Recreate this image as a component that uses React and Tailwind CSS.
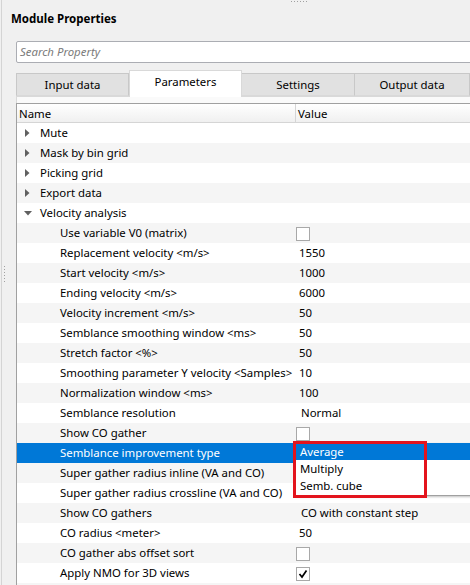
import React from "react";

const rows = [
  { name: "Mute", top: true, arrow: "right" },
  { name: "Mask by bin grid", top: true, arrow: "right" },
  { name: "Picking grid", top: true, arrow: "right" },
  { name: "Export data", top: true, arrow: "right" },
  { name: "Velocity analysis", top: true, arrow: "down" },
  { name: "Use variable V0 (matrix)", v: { t: "check" } },
  { name: "Replacement velocity <m/s>", v: { t: "text", s: "1550" } },
  { name: "Start velocity <m/s>", v: { t: "text", s: "1000" } },
  { name: "Ending velocity <m/s>", v: { t: "text", s: "6000" } },
  { name: "Velocity increment <m/s>", v: { t: "text", s: "50" } },
  { name: "Semblance smoothing window <ms>", v: { t: "text", s: "50" } },
  { name: "Stretch factor <%>", v: { t: "text", s: "50" } },
  { name: "Smoothing parameter Y velocity <Samples>", v: { t: "text", s: "10" } },
  { name: "Normalization window <ms>", v: { t: "text", s: "100" } },
  { name: "Semblance resolution", v: { t: "combo", s: "Normal" } },
  { name: "Show CO gather", v: { t: "check" } },
  { name: "Semblance improvement type", selected: true },
  { name: "Super gather radius inline (VA and CO)" },
  { name: "Super gather radius crossline (VA and CO)" },
  { name: "Show CO gathers", v: { t: "combo", s: "CO with constant step" } },
  { name: "CO radius <meter>", v: { t: "text", s: "50" } },
  { name: "CO gather abs offset sort", v: { t: "check" } },
  { name: "Apply NMO for 3D views", v: { t: "checked" } },
  { name: "" },
];

function Arrow({ dir }) {
  if (dir === "down") {
    return (
      <svg width="8" height="5" viewBox="0 0 8 5" className="absolute left-[7px] top-[8px]">
        <path d="M0 0 L8 0 L4 4.5 Z" fill="#606060" />
      </svg>
    );
  }
  return (
    <svg width="5" height="8" viewBox="0 0 5 8" className="absolute left-[8px] top-[6px]">
      <path d="M0 0 L4.5 4 L0 8 Z" fill="#606060" />
    </svg>
  );
}

function Value({ v }) {
  if (!v) return null;
  if (v.t === "text") return <span className="pl-[3px]">{v.s}</span>;
  if (v.t === "combo") return <span className="pl-[5px]">{v.s}</span>;
  if (v.t === "check" || v.t === "checked") {
    return (
      <div className="w-[14px] h-[14px] border border-[#a8a8a8] bg-white mt-[1px] flex items-center justify-center">
        {v.t === "checked" && (
          <svg width="10" height="10" viewBox="0 0 10 10">
            <path d="M1.5 5 L4 8 L8.5 1.5" stroke="#000" strokeWidth="1.7" fill="none" />
          </svg>
        )}
      </div>
    );
  }
  return null;
}

export default function App() {
  return (
    <div
      className="relative w-[470px] h-[585px] overflow-hidden bg-[#f0f0f0] text-black"
      style={{ fontFamily: '"Noto Sans", "Open Sans", sans-serif' }}
    >
      {/* top splitter grip */}
      <div className="absolute left-[291px] top-[1px] flex gap-[2px]">
        {[0, 1, 2, 3, 4, 5].map((i) => (
          <div key={i} className="w-[1px] h-[1px] bg-[#a0a0a0]" />
        ))}
      </div>
      {/* left splitter grip */}
      <div className="absolute left-[4px] top-[266px] flex flex-col gap-[2px]">
        {[0, 1, 2, 3, 4, 5].map((i) => (
          <div key={i} className="w-[1px] h-[1px] bg-[#a0a0a0]" />
        ))}
      </div>

      <div className="absolute left-0 top-0 h-full w-[2px] border-r border-[#d4d4d4]" />

      <div className="flex flex-col pl-[16px]">
        <div className="shrink-0 pt-[10px] -ml-[5px] text-[11.5px] font-bold leading-[18px] h-[41px]">
          Module Properties
        </div>
        <div className="shrink-0 h-[22px] border border-[#abadb3] rounded-[2px] bg-white pl-[3px] flex items-center italic text-[11.4px] text-[#7a7a7a] -mr-[4px]">
          Search Property
        </div>
        {/* tabs */}
        <div className="shrink-0 mt-[6px] flex h-[27px] items-end text-[11.4px]">
          <div className="w-[113px] h-[23px] bg-[#e1e1e1] border border-[#c8c8c8] border-b-[#d9d9d9] flex items-center justify-center">
            Input data
          </div>
          <div className="w-[113px] h-[27px] bg-white border border-[#d9d9d9] border-b-0 flex items-center justify-center pb-[4px] relative z-10 -mb-[1px]">
            Parameters
          </div>
          <div className="w-[113px] h-[23px] bg-[#e1e1e1] border border-l-0 border-[#c8c8c8] border-b-[#d9d9d9] flex items-center justify-center">
            Settings
          </div>
          <div className="w-[115px] h-[23px] bg-[#e1e1e1] border border-l-0 border-[#c8c8c8] border-b-[#d9d9d9] flex items-center justify-center">
            Output data
          </div>
        </div>
        {/* pane */}
        <div className="shrink-0 bg-[#fafafa] border-l border-t border-[#d9d9d9] pt-[6px]">
          <div className="border-l border-t border-[#a0a0a0] bg-white -ml-[1px] text-[11.4px]">
            <div className="flex h-[19px] leading-[19px] bg-gradient-to-b from-[#ffffff] to-[#f0f0f0] border-b border-[#d5d5d5]">
              <div className="w-[279px] pl-[2px] border-r border-[#d5d5d5]">Name</div>
              <div className="pl-[2px]">Value</div>
            </div>
            {rows.map((r, i) => (
              <div
                key={i}
                className={
                  "flex h-[20px] leading-[20px] " +
                  (r.selected ? "bg-[#0078d7] text-white" : i % 2 === 1 ? "bg-[#f5f5f5]" : "bg-white")
                }
              >
                <div className={"relative w-[279px] whitespace-nowrap " + (r.top ? "pl-[23px]" : "pl-[43px]")}>
                  {r.arrow && <Arrow dir={r.arrow} />}
                  {r.name}
                </div>
                <div className="flex items-center whitespace-nowrap">
                  <Value v={r.v} />
                </div>
              </div>
            ))}
          </div>
        </div>
      </div>

      {/* dropdown popup */}
      <div className="absolute left-[296px] top-[443px] w-[180px] h-[53px] bg-white border-b border-[#a0a0a0] shadow-[0_1px_2px_rgba(0,0,0,0.25)] text-[11.4px] leading-[17px]">
        <div className="h-[17px] bg-[#0078d7] text-white pl-[4px]">Average</div>
        <div className="h-[17px] pl-[4px]">Multiply</div>
        <div className="h-[17px] pl-[4px]">Semb. cube</div>
      </div>
      {/* red annotation */}
      <div className="absolute left-[293px] top-[441px] w-[134px] h-[57px] border-[3px] border-[#e3141d]" />
    </div>
  );
}
